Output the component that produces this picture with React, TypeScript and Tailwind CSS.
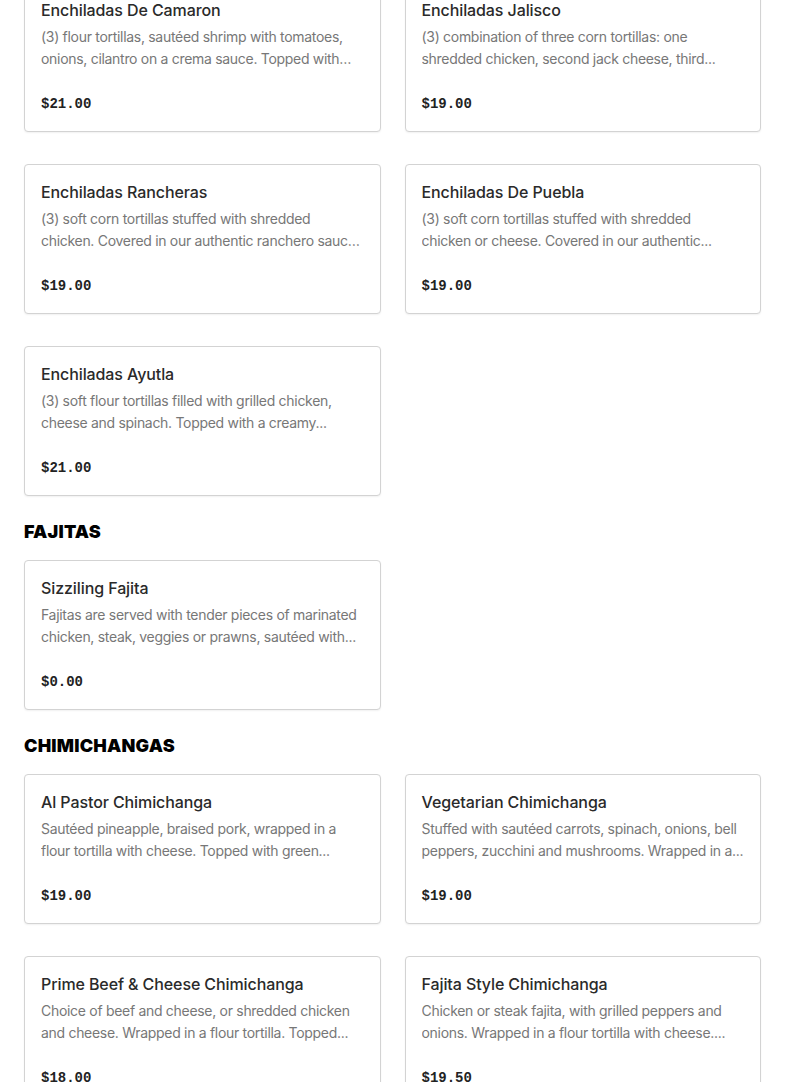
const sections: { title?: string; items: { name: string; desc: string; price: string }[] }[] = [
  {
    items: [
      {
        name: 'Enchiladas De Camaron',
        desc: '(3) flour tortillas, sautéed shrimp with tomatoes, onions, cilantro on a crema sauce. Topped with sour cream and queso fresco.',
        price: '$21.00',
      },
      {
        name: 'Enchiladas Jalisco',
        desc: '(3) combination of three corn tortillas: one shredded chicken, second jack cheese, third...',
        price: '$19.00',
      },
      {
        name: 'Enchiladas Rancheras',
        desc: '(3) soft corn tortillas stuffed with shredded chicken. Covered in our authentic ranchero sauce and cheese.',
        price: '$19.00',
      },
      {
        name: 'Enchiladas De Puebla',
        desc: '(3) soft corn tortillas stuffed with shredded chicken\u00a0or cheese. Covered in our authentic...',
        price: '$19.00',
      },
      {
        name: 'Enchiladas Ayutla',
        desc: '(3) soft flour tortillas filled with grilled chicken, cheese and spinach. Topped with a creamy...',
        price: '$21.00',
      },
    ],
  },
  {
    title: 'FAJITAS',
    items: [
      {
        name: 'Sizziling Fajita',
        desc: 'Fajitas are served with tender pieces of marinated chicken, steak, veggies or prawns, sautéed with...',
        price: '$0.00',
      },
    ],
  },
  {
    title: 'CHIMICHANGAS',
    items: [
      {
        name: 'Al Pastor Chimichanga',
        desc: 'Sautéed pineapple, braised pork, wrapped in a flour tortilla with cheese. Topped with green...',
        price: '$19.00',
      },
      {
        name: 'Vegetarian Chimichanga',
        desc: 'Stuffed with sautéed carrots, spinach, onions, bell peppers, zucchini and mushrooms. Wrapped in a...',
        price: '$19.00',
      },
      {
        name: 'Prime Beef & Cheese Chimichanga',
        desc: 'Choice of beef and cheese, or shredded chicken and cheese. Wrapped in a flour tortilla. Topped...',
        price: '$18.00',
      },
      {
        name: 'Fajita Style Chimichanga',
        desc: 'Chicken or steak fajita, with grilled peppers and onions. Wrapped in a flour tortilla with cheese....',
        price: '$19.50',
      },
    ],
  },
];

function ItemCard({ name, desc, price }: { name: string; desc: string; price: string }) {
  return (
    <div className="h-[150px] rounded-[4px] border border-[#d3d3d3] bg-white px-4 pt-[15px] shadow-[0_1px_2px_rgba(0,0,0,0.06)]">
      <h3 className="text-[16px] leading-6 font-medium tracking-[-0.1px] text-[#2a2a2a]">{name}</h3>
      <p className="mt-[4px] line-clamp-2 text-[14px] leading-[22px] tracking-[-0.3px] text-[#777]">{desc}</p>
      <p className="mt-[24px] font-['Liberation_Mono',monospace] text-[14px] leading-5 font-bold text-[#222]">
        {price}
      </p>
    </div>
  );
}

export default function App() {
  return (
    <div className="min-h-screen bg-white font-['Inter',sans-serif]">
      <div className="mt-[-18px] px-6">
        {sections.map((section, i) => (
          <div key={i}>
            {section.title && (
              <h2 className="mt-[22px] mb-[14px] text-[18px] leading-7 font-black tracking-[0.2px] text-black">
                {section.title}
              </h2>
            )}
            <div className="grid grid-cols-2 gap-x-6 gap-y-8">
              {section.items.map((item) => (
                <ItemCard key={item.name} {...item} />
              ))}
            </div>
          </div>
        ))}
      </div>
    </div>
  );
}
